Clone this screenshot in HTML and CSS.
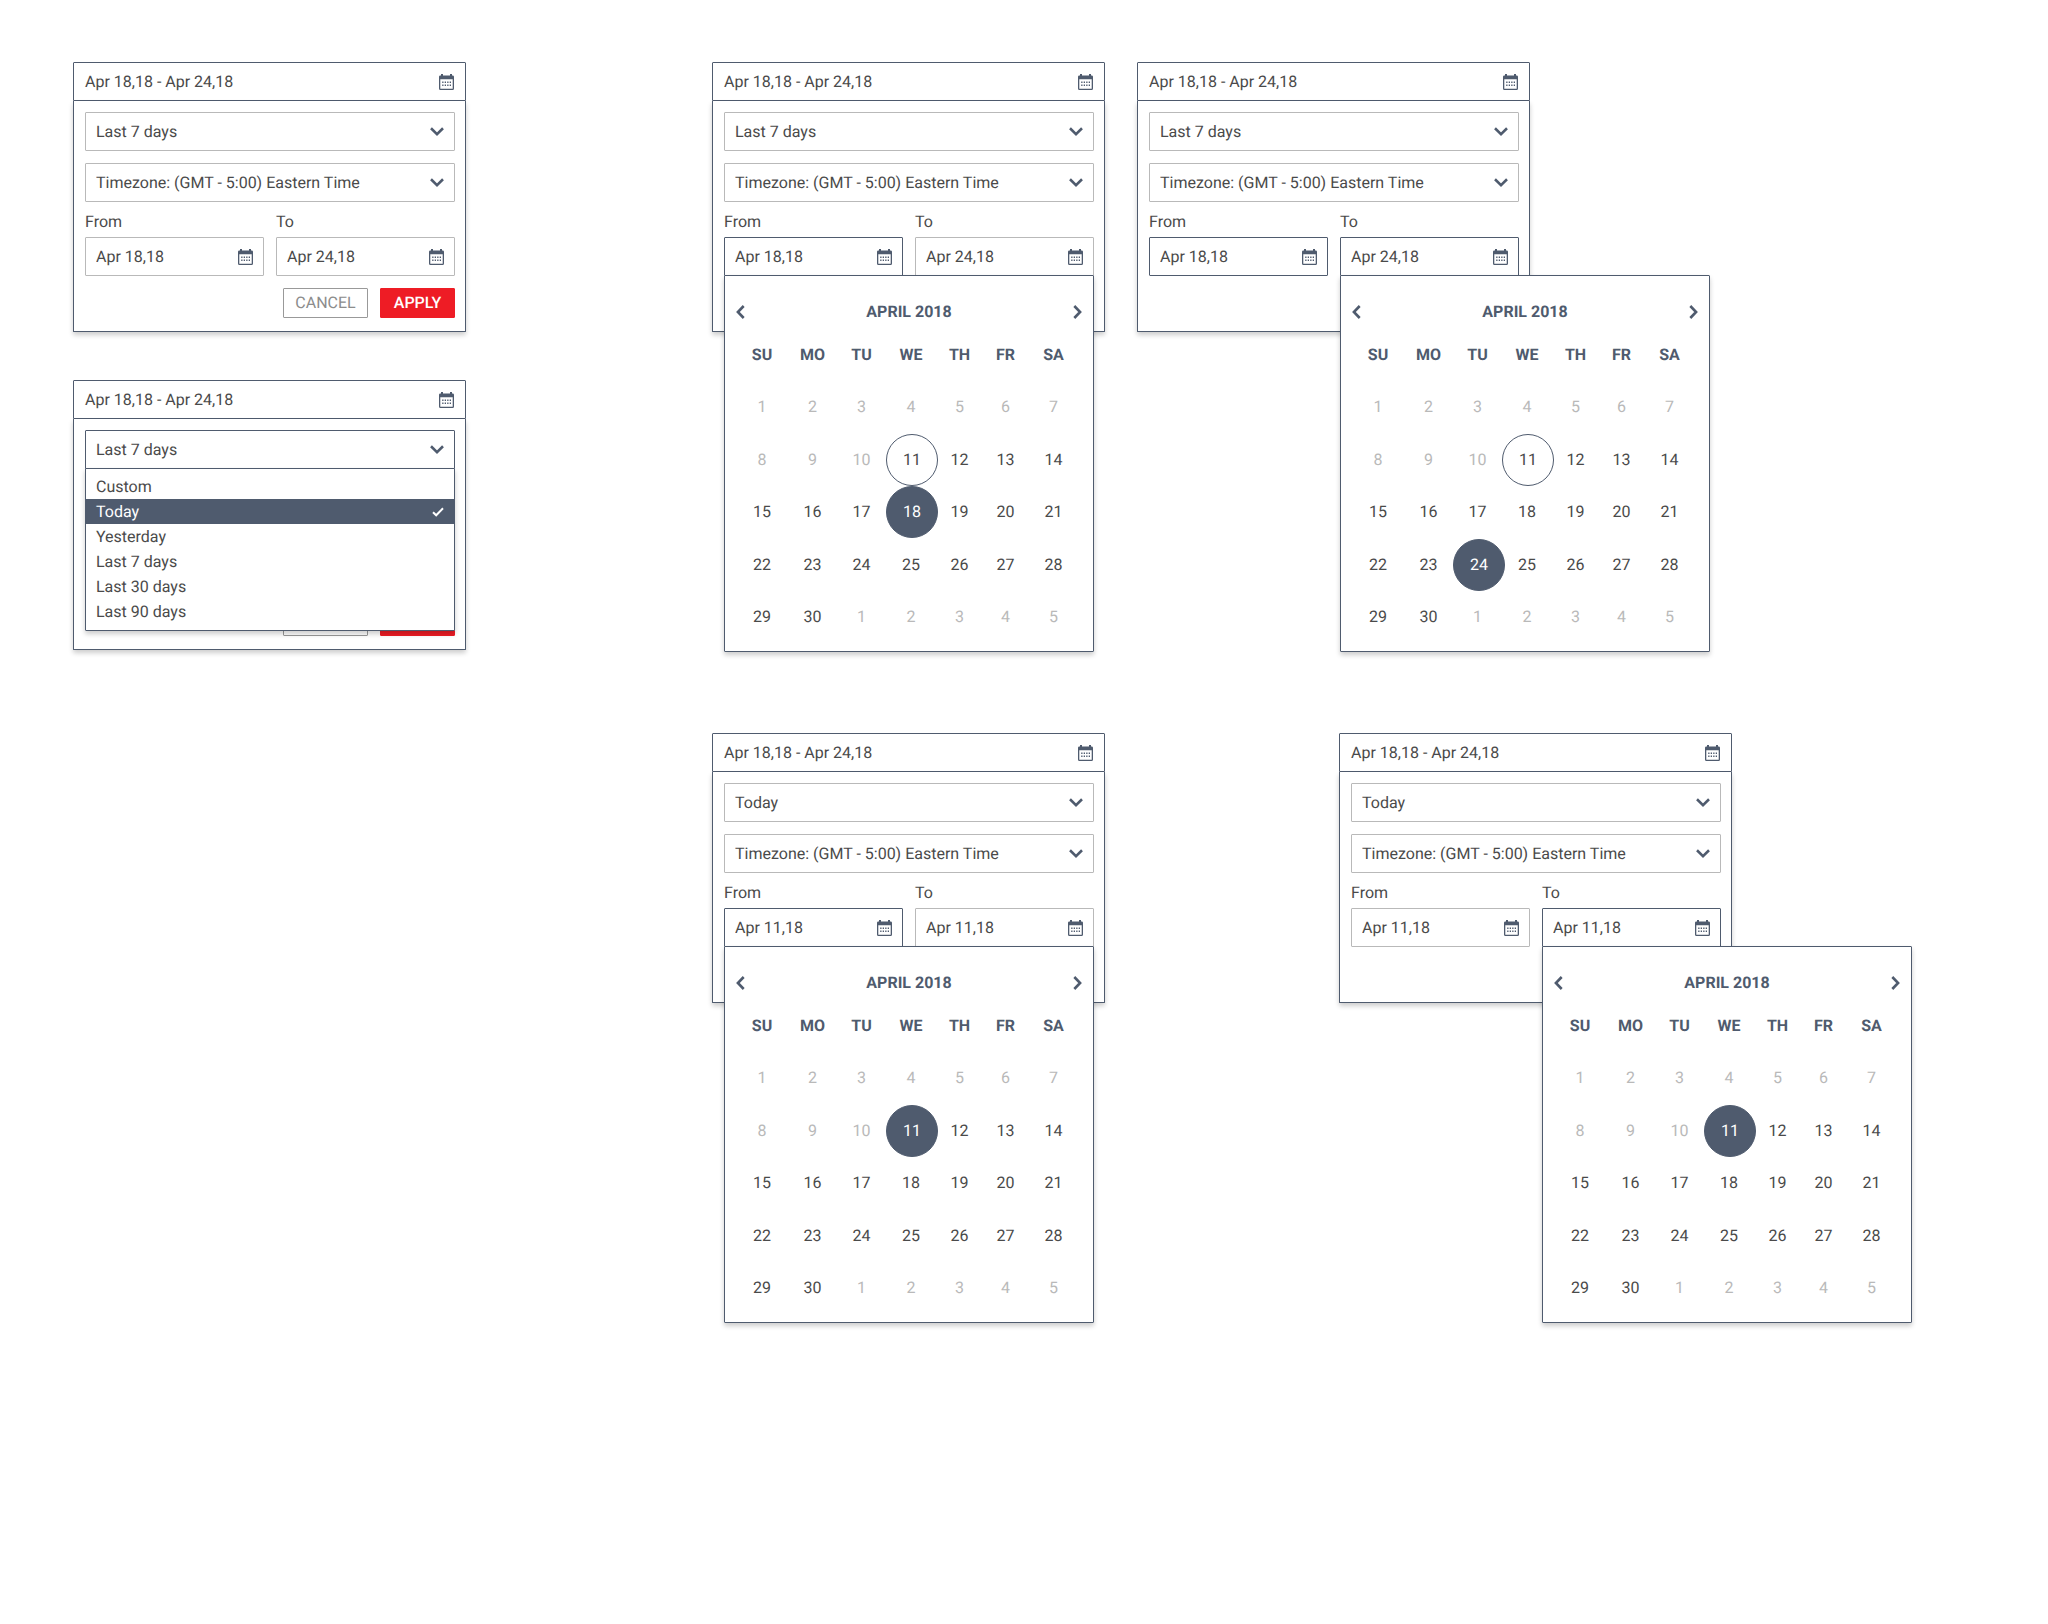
FILE: index.html
```
<!DOCTYPE html>
<html lang="en">
<head>
<meta charset="utf-8">
<meta name="viewport" content="width=device-width, initial-scale=1">
<title>Date range picker</title>
<link rel="stylesheet" href="styles.css">
</head>
<body>
<svg class="sprite" aria-hidden="true">
  <symbol id="cal" viewBox="0 0 15 16">
    <path fill="currentColor" fill-rule="evenodd" d="M2 0h2v1.4h7V0h2v1.4H13.6Q15 1.4 15 2.8V14.4Q15 16 13.6 16H1.4Q0 16 0 14.4V2.8Q0 1.4 1.4 1.4H2ZM1.3 5.2V14.7H13.7V5.2Z"/>
    <path fill="currentColor" d="M3.2 7.4h1.3v1.5H3.2zM5.7 7.4h1.3v1.5H5.7zM8.2 7.4h1.3v1.5H8.2zM10.7 7.4h1.3v1.5H10.7zM3.2 10.6h1.3v1.5H3.2zM5.7 10.6h1.3v1.5H5.7zM8.2 10.6h1.3v1.5H8.2zM10.7 10.6h1.3v1.5H10.7z"/>
  </symbol>
  <symbol id="down" viewBox="0 0 14 9"><path fill="none" stroke="currentColor" stroke-width="2.6" d="M1 1.3 7 7.1 13 1.3"/></symbol>
  <symbol id="prev" viewBox="0 0 9 14"><path fill="none" stroke="currentColor" stroke-width="2.6" d="M7.7 1 1.9 7 7.7 13"/></symbol>
  <symbol id="next" viewBox="0 0 9 14"><path fill="none" stroke="currentColor" stroke-width="2.6" d="M1.3 1 7.1 7 1.3 13"/></symbol>
  <symbol id="check" viewBox="0 0 12 10"><path fill="none" stroke="currentColor" stroke-width="2" d="M1 5.2 4.2 8.3 11 1.3"/></symbol>
</svg>

<main class="board">
  <div class="stack">
    <section class="picker" aria-label="Date range">
      <button class="trigger" type="button">Apr 18,18 - Apr 24,18<svg class="icon-cal"><use href="#cal"/></svg></button>
      <form class="body">
        <div class="dropdown">
          <select class="box" aria-label="Range"><option>Last 7 days</option></select>
          <svg class="icon-down"><use href="#down"/></svg>
        </div>
        <div class="dropdown">
          <select class="box" aria-label="Timezone"><option>Timezone: (GMT - 5:00) Eastern Time</option></select>
          <svg class="icon-down"><use href="#down"/></svg>
        </div>
        <div class="dates">
          <div class="date">
            <label for="from1">From</label>
            <div class="field"><input class="box" id="from1" type="text" value="Apr 18,18"><svg class="icon-cal"><use href="#cal"/></svg></div>
          </div>
          <div class="date">
            <label for="to1">To</label>
            <div class="field"><input class="box" id="to1" type="text" value="Apr 24,18"><svg class="icon-cal"><use href="#cal"/></svg></div>
          </div>
        </div>
        <div class="actions"><button class="btn" type="button">CANCEL</button><button class="btn btn-apply" type="button">APPLY</button></div>
      </form>
    </section>

    <section class="picker" aria-label="Date range, presets open">
      <button class="trigger" type="button">Apr 18,18 - Apr 24,18<svg class="icon-cal"><use href="#cal"/></svg></button>
      <form class="body">
        <div class="dropdown">
          <select class="box active" aria-label="Range"><option>Last 7 days</option></select>
          <svg class="icon-down"><use href="#down"/></svg>
          <ul class="menu" role="listbox" aria-label="Range presets">
            <li role="option">Custom</li>
            <li role="option" class="chosen" aria-selected="true">Today<svg class="icon-check"><use href="#check"/></svg></li>
            <li role="option">Yesterday</li>
            <li role="option">Last 7 days</li>
            <li role="option">Last 30 days</li>
            <li role="option">Last 90 days</li>
          </ul>
        </div>
        <div class="dropdown covered">
          <select class="box" aria-label="Timezone"><option>Timezone: (GMT - 5:00) Eastern Time</option></select>
          <svg class="icon-down"><use href="#down"/></svg>
        </div>
        <div class="dates covered">
          <div class="date">
            <label for="from2">From</label>
            <div class="field"><input class="box" id="from2" type="text" value="Apr 18,18"><svg class="icon-cal"><use href="#cal"/></svg></div>
          </div>
          <div class="date">
            <label for="to2">To</label>
            <div class="field"><input class="box" id="to2" type="text" value="Apr 24,18"><svg class="icon-cal"><use href="#cal"/></svg></div>
          </div>
        </div>
        <div class="actions"><button class="btn" type="button" aria-label="Cancel"></button><button class="btn btn-apply" type="button" aria-label="Apply"></button></div>
      </form>
    </section>
  </div>

  <div class="states">
    <div class="row">
      <section class="picker" aria-label="Last 7 days, from date open">
        <button class="trigger" type="button">Apr 18,18 - Apr 24,18<svg class="icon-cal"><use href="#cal"/></svg></button>
        <form class="body">
          <div class="dropdown">
            <select class="box" aria-label="Range"><option>Last 7 days</option></select>
            <svg class="icon-down"><use href="#down"/></svg>
          </div>
          <div class="dropdown">
            <select class="box" aria-label="Timezone"><option>Timezone: (GMT - 5:00) Eastern Time</option></select>
            <svg class="icon-down"><use href="#down"/></svg>
          </div>
          <div class="dates">
            <div class="date">
              <label for="from3">From</label>
              <div class="field"><input class="box active" id="from3" type="text" value="Apr 18,18"><svg class="icon-cal"><use href="#cal"/></svg>
                <div class="calendar">
                  <div class="month"><button type="button" aria-label="Previous month"><svg class="icon-side"><use href="#prev"/></svg></button><strong>APRIL 2018</strong><button type="button" aria-label="Next month"><svg class="icon-side"><use href="#next"/></svg></button></div>
                  <table>
                    <thead><tr><th>SU</th><th>MO</th><th>TU</th><th>WE</th><th>TH</th><th>FR</th><th>SA</th></tr></thead>
                    <tbody>
                      <tr><td class="off">1</td><td class="off">2</td><td class="off">3</td><td class="off">4</td><td class="off">5</td><td class="off">6</td><td class="off">7</td></tr>
                      <tr><td class="off">8</td><td class="off">9</td><td class="off">10</td><td><button class="day today" type="button">11</button></td><td><button class="day" type="button">12</button></td><td><button class="day" type="button">13</button></td><td><button class="day" type="button">14</button></td></tr>
                      <tr><td><button class="day" type="button">15</button></td><td><button class="day" type="button">16</button></td><td><button class="day" type="button">17</button></td><td><button class="day picked" type="button">18</button></td><td><button class="day" type="button">19</button></td><td><button class="day" type="button">20</button></td><td><button class="day" type="button">21</button></td></tr>
                      <tr><td><button class="day" type="button">22</button></td><td><button class="day" type="button">23</button></td><td><button class="day" type="button">24</button></td><td><button class="day" type="button">25</button></td><td><button class="day" type="button">26</button></td><td><button class="day" type="button">27</button></td><td><button class="day" type="button">28</button></td></tr>
                      <tr><td><button class="day" type="button">29</button></td><td><button class="day" type="button">30</button></td><td class="off">1</td><td class="off">2</td><td class="off">3</td><td class="off">4</td><td class="off">5</td></tr>
                    </tbody>
                  </table>
                </div>
              </div>
            </div>
            <div class="date">
              <label for="to3">To</label>
              <div class="field"><input class="box" id="to3" type="text" value="Apr 24,18"><svg class="icon-cal"><use href="#cal"/></svg></div>
            </div>
          </div>
          <div class="actions covered"><button class="btn" type="button" aria-label="Cancel"></button><button class="btn btn-apply" type="button" aria-label="Apply"></button></div>
        </form>
      </section>

      <section class="picker" aria-label="Last 7 days, to date open">
        <button class="trigger" type="button">Apr 18,18 - Apr 24,18<svg class="icon-cal"><use href="#cal"/></svg></button>
        <form class="body">
          <div class="dropdown">
            <select class="box" aria-label="Range"><option>Last 7 days</option></select>
            <svg class="icon-down"><use href="#down"/></svg>
          </div>
          <div class="dropdown">
            <select class="box" aria-label="Timezone"><option>Timezone: (GMT - 5:00) Eastern Time</option></select>
            <svg class="icon-down"><use href="#down"/></svg>
          </div>
          <div class="dates">
            <div class="date">
              <label for="from4">From</label>
              <div class="field"><input class="box active" id="from4" type="text" value="Apr 18,18"><svg class="icon-cal"><use href="#cal"/></svg></div>
            </div>
            <div class="date">
              <label for="to4">To</label>
              <div class="field"><input class="box active" id="to4" type="text" value="Apr 24,18"><svg class="icon-cal"><use href="#cal"/></svg>
                <div class="calendar">
                  <div class="month"><button type="button" aria-label="Previous month"><svg class="icon-side"><use href="#prev"/></svg></button><strong>APRIL 2018</strong><button type="button" aria-label="Next month"><svg class="icon-side"><use href="#next"/></svg></button></div>
                  <table>
                    <thead><tr><th>SU</th><th>MO</th><th>TU</th><th>WE</th><th>TH</th><th>FR</th><th>SA</th></tr></thead>
                    <tbody>
                      <tr><td class="off">1</td><td class="off">2</td><td class="off">3</td><td class="off">4</td><td class="off">5</td><td class="off">6</td><td class="off">7</td></tr>
                      <tr><td class="off">8</td><td class="off">9</td><td class="off">10</td><td><button class="day today" type="button">11</button></td><td><button class="day" type="button">12</button></td><td><button class="day" type="button">13</button></td><td><button class="day" type="button">14</button></td></tr>
                      <tr><td><button class="day" type="button">15</button></td><td><button class="day" type="button">16</button></td><td><button class="day" type="button">17</button></td><td><button class="day" type="button">18</button></td><td><button class="day" type="button">19</button></td><td><button class="day" type="button">20</button></td><td><button class="day" type="button">21</button></td></tr>
                      <tr><td><button class="day" type="button">22</button></td><td><button class="day" type="button">23</button></td><td><button class="day picked" type="button">24</button></td><td><button class="day" type="button">25</button></td><td><button class="day" type="button">26</button></td><td><button class="day" type="button">27</button></td><td><button class="day" type="button">28</button></td></tr>
                      <tr><td><button class="day" type="button">29</button></td><td><button class="day" type="button">30</button></td><td class="off">1</td><td class="off">2</td><td class="off">3</td><td class="off">4</td><td class="off">5</td></tr>
                    </tbody>
                  </table>
                </div>
              </div>
            </div>
          </div>
          <div class="actions covered"><button class="btn" type="button" aria-label="Cancel"></button><button class="btn btn-apply" type="button" aria-label="Apply"></button></div>
        </form>
      </section>
    </div>

    <div class="row row-wide">
      <section class="picker" aria-label="Today, from date open">
        <button class="trigger" type="button">Apr 18,18 - Apr 24,18<svg class="icon-cal"><use href="#cal"/></svg></button>
        <form class="body">
          <div class="dropdown">
            <select class="box" aria-label="Range"><option>Today</option></select>
            <svg class="icon-down"><use href="#down"/></svg>
          </div>
          <div class="dropdown">
            <select class="box" aria-label="Timezone"><option>Timezone: (GMT - 5:00) Eastern Time</option></select>
            <svg class="icon-down"><use href="#down"/></svg>
          </div>
          <div class="dates">
            <div class="date">
              <label for="from5">From</label>
              <div class="field"><input class="box active" id="from5" type="text" value="Apr 11,18"><svg class="icon-cal"><use href="#cal"/></svg>
                <div class="calendar">
                  <div class="month"><button type="button" aria-label="Previous month"><svg class="icon-side"><use href="#prev"/></svg></button><strong>APRIL 2018</strong><button type="button" aria-label="Next month"><svg class="icon-side"><use href="#next"/></svg></button></div>
                  <table>
                    <thead><tr><th>SU</th><th>MO</th><th>TU</th><th>WE</th><th>TH</th><th>FR</th><th>SA</th></tr></thead>
                    <tbody>
                      <tr><td class="off">1</td><td class="off">2</td><td class="off">3</td><td class="off">4</td><td class="off">5</td><td class="off">6</td><td class="off">7</td></tr>
                      <tr><td class="off">8</td><td class="off">9</td><td class="off">10</td><td><button class="day picked" type="button">11</button></td><td><button class="day" type="button">12</button></td><td><button class="day" type="button">13</button></td><td><button class="day" type="button">14</button></td></tr>
                      <tr><td><button class="day" type="button">15</button></td><td><button class="day" type="button">16</button></td><td><button class="day" type="button">17</button></td><td><button class="day" type="button">18</button></td><td><button class="day" type="button">19</button></td><td><button class="day" type="button">20</button></td><td><button class="day" type="button">21</button></td></tr>
                      <tr><td><button class="day" type="button">22</button></td><td><button class="day" type="button">23</button></td><td><button class="day" type="button">24</button></td><td><button class="day" type="button">25</button></td><td><button class="day" type="button">26</button></td><td><button class="day" type="button">27</button></td><td><button class="day" type="button">28</button></td></tr>
                      <tr><td><button class="day" type="button">29</button></td><td><button class="day" type="button">30</button></td><td class="off">1</td><td class="off">2</td><td class="off">3</td><td class="off">4</td><td class="off">5</td></tr>
                    </tbody>
                  </table>
                </div>
              </div>
            </div>
            <div class="date">
              <label for="to5">To</label>
              <div class="field"><input class="box" id="to5" type="text" value="Apr 11,18"><svg class="icon-cal"><use href="#cal"/></svg></div>
            </div>
          </div>
          <div class="actions covered"><button class="btn" type="button" aria-label="Cancel"></button><button class="btn btn-apply" type="button" aria-label="Apply"></button></div>
        </form>
      </section>

      <section class="picker" aria-label="Today, to date open">
        <button class="trigger" type="button">Apr 18,18 - Apr 24,18<svg class="icon-cal"><use href="#cal"/></svg></button>
        <form class="body">
          <div class="dropdown">
            <select class="box" aria-label="Range"><option>Today</option></select>
            <svg class="icon-down"><use href="#down"/></svg>
          </div>
          <div class="dropdown">
            <select class="box" aria-label="Timezone"><option>Timezone: (GMT - 5:00) Eastern Time</option></select>
            <svg class="icon-down"><use href="#down"/></svg>
          </div>
          <div class="dates">
            <div class="date">
              <label for="from6">From</label>
              <div class="field"><input class="box" id="from6" type="text" value="Apr 11,18"><svg class="icon-cal"><use href="#cal"/></svg></div>
            </div>
            <div class="date">
              <label for="to6">To</label>
              <div class="field"><input class="box active" id="to6" type="text" value="Apr 11,18"><svg class="icon-cal"><use href="#cal"/></svg>
                <div class="calendar">
                  <div class="month"><button type="button" aria-label="Previous month"><svg class="icon-side"><use href="#prev"/></svg></button><strong>APRIL 2018</strong><button type="button" aria-label="Next month"><svg class="icon-side"><use href="#next"/></svg></button></div>
                  <table>
                    <thead><tr><th>SU</th><th>MO</th><th>TU</th><th>WE</th><th>TH</th><th>FR</th><th>SA</th></tr></thead>
                    <tbody>
                      <tr><td class="off">1</td><td class="off">2</td><td class="off">3</td><td class="off">4</td><td class="off">5</td><td class="off">6</td><td class="off">7</td></tr>
                      <tr><td class="off">8</td><td class="off">9</td><td class="off">10</td><td><button class="day picked" type="button">11</button></td><td><button class="day" type="button">12</button></td><td><button class="day" type="button">13</button></td><td><button class="day" type="button">14</button></td></tr>
                      <tr><td><button class="day" type="button">15</button></td><td><button class="day" type="button">16</button></td><td><button class="day" type="button">17</button></td><td><button class="day" type="button">18</button></td><td><button class="day" type="button">19</button></td><td><button class="day" type="button">20</button></td><td><button class="day" type="button">21</button></td></tr>
                      <tr><td><button class="day" type="button">22</button></td><td><button class="day" type="button">23</button></td><td><button class="day" type="button">24</button></td><td><button class="day" type="button">25</button></td><td><button class="day" type="button">26</button></td><td><button class="day" type="button">27</button></td><td><button class="day" type="button">28</button></td></tr>
                      <tr><td><button class="day" type="button">29</button></td><td><button class="day" type="button">30</button></td><td class="off">1</td><td class="off">2</td><td class="off">3</td><td class="off">4</td><td class="off">5</td></tr>
                    </tbody>
                  </table>
                </div>
              </div>
            </div>
          </div>
          <div class="actions covered"><button class="btn" type="button" aria-label="Cancel"></button><button class="btn btn-apply" type="button" aria-label="Apply"></button></div>
        </form>
      </section>
    </div>
  </div>
</main>
</body>
</html>
```
FILE: styles.css
```
:root {
  --slate: #4f5b6e;
  --text: #4a4a4a;
  --line: #b9b9b9;
  --shadow: 0 3px 5px rgba(0, 0, 0, 0.2);
}

* { box-sizing: border-box; }

body {
  margin: 0;
  background: #fff;
  color: var(--text);
  font: 16px/20px Roboto, sans-serif;
  text-rendering: geometricPrecision;
}

button, input, select { font: inherit; color: inherit; text-rendering: inherit; margin: 0; }
button { cursor: pointer; }

.sprite { display: none; }
.icon-cal { width: 15px; height: 16px; color: var(--slate); }
.icon-down { width: 14px; height: 9px; color: var(--slate); }
.icon-side { display: block; width: 9px; height: 14px; }
.icon-check { width: 12px; height: 10px; }

/* Board; the bottom padding leaves room for the open calendars */
.board {
  display: grid;
  grid-template-columns: minmax(393px, 639fr) minmax(0, 1336fr);
  align-items: start;
  min-height: 100vh;
  padding: 62px 0 400px 73px;
}
.stack { display: flex; flex-direction: column; gap: 48px; }
.states { display: flex; flex-direction: column; gap: 401px; }
.row { display: flex; gap: 32px; }
.row-wide { gap: 234px; }

/* Picker */
.picker { width: 393px; }
.trigger {
  display: flex;
  align-items: center;
  justify-content: space-between;
  width: 100%;
  height: 39px;
  padding: 0 11px;
  border: 1px solid var(--slate);
  border-radius: 1px 1px 0 0;
  background: #fff;
}
.body {
  padding: 11px 10px 13px 11px;
  border: 1px solid var(--slate);
  border-top: 0;
  border-radius: 0 0 1px 1px;
  background: #fff;
  box-shadow: var(--shadow);
}

.box {
  display: block;
  width: 100%;
  height: 39px;
  padding: 0 10px;
  border: 1px solid var(--line);
  border-radius: 1px;
  outline: 0;
  background: #fff;
  appearance: none;
}
.box.active { border-color: var(--slate); }

/* The icon shares the control's grid cell */
.dropdown, .field { position: relative; display: grid; align-items: center; }
.dropdown > .box, .field > .box, .dropdown > svg, .field > svg { grid-area: 1 / 1; }
.dropdown > svg, .field > svg { justify-self: end; margin-right: 11px; pointer-events: none; }
.dropdown { margin-bottom: 12px; }

.dates { display: grid; grid-template-columns: 1fr 1fr; gap: 12px; margin-top: -12px; }
.date label { display: block; padding: 10px 0 5px; }

.actions { display: flex; justify-content: flex-end; gap: 12px; margin-top: 12px; }
.btn {
  width: 85px;
  height: 30px;
  padding: 0;
  border: 1px solid #999;
  border-radius: 1px;
  background: #fff;
  color: #8c8c8c;
}
.btn-apply { width: 75px; border-color: #ee1c25; background: #ee1c25; color: #fff; font-weight: 500; }

/* Controls that lie under an open popup cannot be reached */
.covered { visibility: hidden; }

/* Preset menu */
.menu {
  position: absolute;
  z-index: 2;
  top: 38px;
  left: 0;
  right: 0;
  margin: 0;
  padding: 5px 0 6px;
  border: 1px solid var(--slate);
  border-radius: 0 0 1px 1px;
  background: #fff;
  box-shadow: var(--shadow);
  list-style: none;
}
.menu li {
  display: flex;
  align-items: center;
  justify-content: space-between;
  height: 25px;
  padding: 0 10px;
}
.menu .chosen { background: var(--slate); color: #fff; }

/* Calendar */
.calendar {
  position: absolute;
  z-index: 2;
  top: 38px;
  left: 0;
  width: 370px;
  padding: 19px 11px 8px;
  border: 1px solid var(--slate);
  border-radius: 1px;
  background: #fff;
  box-shadow: var(--shadow);
}
.month {
  display: flex;
  align-items: center;
  justify-content: space-between;
  height: 34px;
  color: var(--slate);
}
.month button { padding: 0; border: 0; background: none; color: inherit; }
.month strong, th { font-weight: 700; }

table { width: 343px; table-layout: fixed; border-collapse: collapse; }
th, td { height: 52px; padding: 0; text-align: center; }
th { color: var(--slate); }
th:nth-child(1) { width: 52px; }
th:nth-child(2), th:nth-child(3) { width: 49px; }
th:nth-child(4) { width: 50px; }
th:nth-child(5) { width: 47px; }
th:nth-child(6) { width: 45px; }
th:nth-child(7) { width: 51px; }
tbody tr:nth-child(even) td { height: 53px; }
.off { color: var(--line); }

.day {
  display: block;
  width: 100%;
  height: 52px;
  padding: 0;
  border: 0;
  background: none;
}
.day.today, .day.picked {
  position: relative;
  width: 52px;
  border: 1px solid var(--slate);
  border-radius: 50%;
}
.day.picked { background: var(--slate); color: #fff; }
```
